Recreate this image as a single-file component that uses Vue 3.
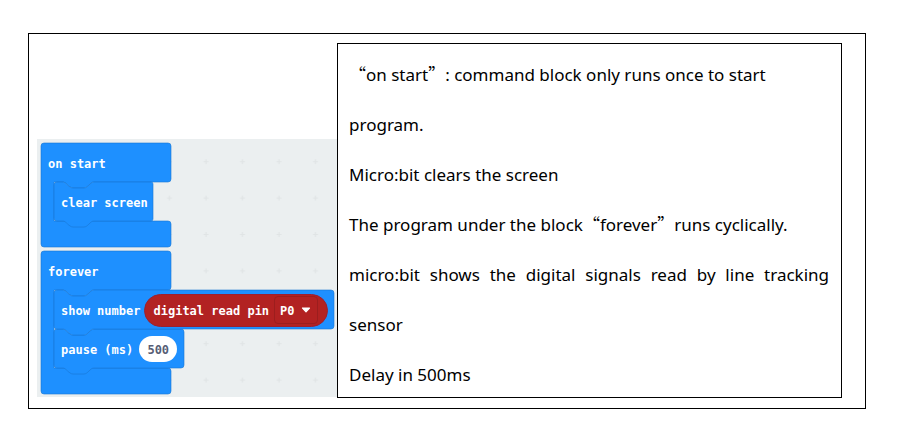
<script setup>
import { ref } from 'vue'

const pin = ref('P0')
const delay = ref('500')
const pins = ['P0', 'P1', 'P2']

const notes = [
  { text: '“on start”: command block only runs once to start program.', ragged: true },
  { text: 'Micro:bit clears the screen' },
  { text: 'The program under the block“forever”runs cyclically.' },
  { text: 'micro:bit shows the digital signals read by line tracking sensor' },
  { text: 'Delay in 500ms' }
]

// Curly quotes are set full-width, so they are split out of the running text.
const split = (text) => text.split(/([“”])/).filter(Boolean)
const isQuote = (part) => part === '“' || part === '”'
</script>

<template>
  <main class="page">
    <div class="frame">
      <section class="workspace" aria-label="Blocks">
        <svg class="shapes" viewBox="0 0 300 258" aria-hidden="true">
          <defs>
            <pattern id="grid" x="5" y="4.5" width="36.5" height="36.4" patternUnits="userSpaceOnUse">
              <path d="M15.500 18.200h5M18 15.700v5" stroke="#e0e4e5" stroke-width="1.2" />
            </pattern>
          </defs>
          <rect width="300" height="258" fill="#ebeff0" />
          <rect width="300" height="258" fill="url(#grid)" />
          <g fill="#1e90ff" stroke="#1976d2" stroke-opacity=".6" stroke-width="1">
            <path d="M7 4H131Q134 4 134 7V40Q134 43 131 43H57C53 43 51 49 47 49H36C32 49 29 43 26 43H17V82H131Q134 82 134 85V105Q134 108 131 108H7Q4 108 4 105V7Q4 4 7 4Z" />
            <path d="M7 112H131Q134 112 134 115V148Q134 151 131 151H57C53 151 51 157 47 157H36C32 157 29 151 26 151H17V229H131Q134 229 134 232V252Q134 255 131 255H7Q4 255 4 252V115Q4 112 7 112Z" />
            <path d="M20 43H26C29 43 32 49 36 49H47C51 49 53 43 57 43H114Q116 43 116 45V80Q116 82 114 82H57C53 82 51 88 47 88H36C32 88 29 82 26 82H20Q17 82 17 79V46Q17 43 20 43Z" />
            <path d="M20 190H26C29 190 32 196 36 196H47C51 196 53 190 57 190H144Q147 190 147 193V226Q147 229 144 229H57C53 229 51 235 47 235H36C32 235 29 229 26 229H20Q17 229 17 226V193Q17 190 20 190Z" />
            <path d="M20 151H26C29 151 32 157 36 157H47C51 157 53 151 57 151H294Q297 151 297 154V187Q297 190 294 190H57C53 190 51 196 47 196H36C32 196 29 190 26 190H20Q17 190 17 187V154Q17 151 20 151Z" />
          </g>
          <rect x="107.500" y="155.500" width="183" height="32" rx="16" fill="#b22222" stroke="#9c2030" />
        </svg>
        <div class="stack">
          <div class="row head"><span class="text">on start</span></div>
          <div class="row body"><span class="text">clear screen</span></div>
          <div class="foot"></div>
        </div>
        <div class="stack">
          <div class="row head"><span class="text">forever</span></div>
          <div class="row body">
            <span class="text">show number</span>
            <span class="reporter">
              <label class="text" for="pin">digital read pin</label>
              <span class="picker">
                <select id="pin" v-model="pin">
                  <option v-for="p in pins" :key="p">{{ p }}</option>
                </select>
                <svg class="arrow" viewBox="0 0 10 6" aria-hidden="true">
                  <path d="M1.500 1H8.500L5 4.800Z" fill="#fff" stroke="#fff" stroke-width="1.200" stroke-linejoin="round" />
                </svg>
              </span>
            </span>
          </div>
          <div class="row body">
            <label class="text" for="delay">pause (ms)</label>
            <input id="delay" v-model="delay" type="text" inputmode="numeric" />
          </div>
          <div class="foot"></div>
        </div>
      </section>
      <section class="notes">
        <div class="lines">
          <p v-for="note in notes" :key="note.text" :class="{ ragged: note.ragged }">
            <template v-for="(part, i) in split(note.text)" :key="i"><span v-if="isQuote(part)" class="quote">{{ part }}</span><template v-else>{{ part }}</template></template>
          </p>
        </div>
      </section>
    </div>
  </main>
</template>

<style>
body {
  margin: 0;
  background: #fff;
}
</style>

<style scoped>
.page {
  padding: 33px 32px 31px 28px;
}
.frame {
  display: flex;
  align-items: flex-end;
  padding: 9px 23px 10px 8px;
  border: 1px solid #000;
}
.workspace {
  position: relative;
  flex: none;
  display: flex;
  flex-direction: column;
  gap: 4px;
  box-sizing: border-box;
  width: 300px;
  padding: 4px 0 3px;
  margin-bottom: 1px;
  color: #fff;
  font: bold 12px/16px "DejaVu Sans Mono", "Liberation Mono", monospace;
}
.shapes {
  position: absolute;
  inset: 0;
  width: 100%;
  height: 100%;
}
.stack {
  position: relative;
}
.row {
  display: flex;
  align-items: center;
  box-sizing: border-box;
  height: 39px;
  padding-top: 1px;
  white-space: nowrap;
}
.text {
  padding-top: 2px;
}
.head {
  padding-left: 11px;
}
.body {
  gap: 6px;
  padding-left: 24px;
}
.foot {
  height: 26px;
}
.reporter {
  display: flex;
  align-items: center;
  gap: 5px;
  padding-left: 7px;
}
.picker {
  position: relative;
  display: flex;
}
select {
  appearance: none;
  box-sizing: border-box;
  width: 44px;
  height: 28px;
  padding: 1px 0 0 5px;
  border: 1px solid #9c1e1e;
  border-radius: 4px;
  background: transparent;
  color: #fff;
  font: inherit;
}
.arrow {
  position: absolute;
  top: 11px;
  right: 7px;
  width: 10px;
  height: 6px;
  pointer-events: none;
}
input {
  box-sizing: border-box;
  width: 38px;
  height: 26px;
  padding: 1px 0 0;
  border: 0;
  border-radius: 13px;
  background: #fff;
  color: #575e75;
  font: inherit;
  text-align: center;
}
.notes {
  flex: 1;
  min-width: 0;
  padding: 6px 12px 0 11px;
  border: 1px solid #000;
  color: #000;
  font: 17px/50px "Noto Sans", "Noto Sans CJK SC", sans-serif;
  text-align: justify;
}
.lines {
  margin-bottom: -3px;
}
.notes p {
  margin: 0;
}
.notes .ragged {
  text-align: left;
}
.quote {
  font-family: "Noto Sans CJK SC", sans-serif;
  line-height: 1;
}
</style>
